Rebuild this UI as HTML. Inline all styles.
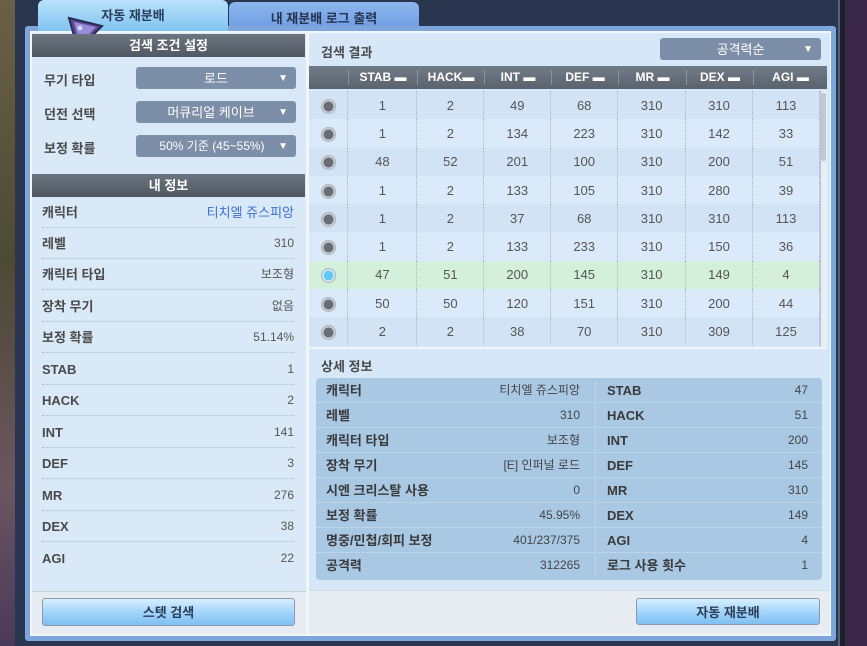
<!DOCTYPE html>
<html><head><meta charset="utf-8"><style>
*{margin:0;padding:0;box-sizing:border-box}
body{width:867px;height:646px;overflow:hidden;position:relative;background:#2a3550;font-family:"Liberation Sans","Noto Sans CJK KR","NanumGothic",sans-serif;font-size:13px;color:#444}
.a{position:absolute}
.bgl{left:0;top:0;width:15px;height:646px;background:linear-gradient(180deg,#6a6048,#4d4a34 40%,#6b5560 75%,#4a3a5a)}
.bgr{left:845px;top:0;width:22px;height:646px;background:#3b2848}
.frameR{left:838px;top:0;width:7px;height:646px;background:#1c2130;border-left:2px solid #59627a}
.tab1{left:38px;top:0;width:190px;height:32px;background:linear-gradient(#b9e3fb,#7fc3f0);border-radius:6px 6px 0 0;text-align:center;font-weight:bold;color:#2a3d5a;padding-top:5px;font-size:13px}
.tab2{left:229px;top:2px;width:190px;height:30px;background:linear-gradient(#8cb6ee,#6b9be2);border-radius:6px 6px 0 0;text-align:center;font-weight:bold;color:#26324e;padding-top:6px;font-size:13px}
.win{left:25px;top:26px;width:811px;height:615px;background:#7ea6dc;border-radius:3px}
.inner{left:30px;top:31px;width:801px;height:605px;background:#f2f6fa}
.lp{left:32px;top:33px;width:274px;height:601px;background:#dae9f8}
.rp{left:309px;top:33px;width:521px;height:601px;background:#d6e8f8}
.hd{background:linear-gradient(#6c7480,#505862);color:#fff;font-weight:bold;text-align:center;height:23px;line-height:23px;font-size:13px}
.lab{font-weight:bold;color:#4a4a4a;font-size:13px}
.dd{background:#7c8ea8;color:#fff;height:22px;line-height:23px;border-radius:3px;text-align:center;font-size:13px}
.dd:after{content:"▼";position:absolute;right:8px;top:0;font-size:10px}
.row{left:42px;width:252px;height:31px;border-bottom:1px dotted #aab8c8;line-height:31px}
.row b{float:left;color:#4a4a4a}
.row span{float:right;color:#555;font-size:12px}
.btn{background:linear-gradient(#d8efff,#9fd3fa 55%,#7fc0f2);border:1px solid #8a9aae;border-radius:3px;text-align:center;font-weight:bold;color:#2c3d58;line-height:27px}
table{border-collapse:collapse}
.tb td{height:28.3px;text-align:center;font-size:13px;color:#555;border-right:1px dotted #a8b8cc;vertical-align:middle}
.tb tr:nth-child(odd) td{background:#d2e3f6}
.tb tr:nth-child(even) td{background:#dbeafa}
.tb tr.sel td{background:#d4f0da}
.rd{display:inline-block;vertical-align:middle;margin-top:2px;width:15px;height:15px;border-radius:50%;background:radial-gradient(#6a6e74 45%,#d8dde4 50%,#8a9098 80%)}
.rd.on{background:radial-gradient(#5ec8f2 42%,#eaf4fa 50%,#7a8898 80%)}
.th{left:309px;top:66px;width:518px;height:23px;background:linear-gradient(#727b88,#5a626e);color:#fff;font-weight:bold;font-size:12px}
.th div{position:absolute;top:0;text-align:center;border-left:1px solid #8a929e;height:15px;margin-top:4px;line-height:15px}
.det{left:316px;top:378px;width:506px;height:202px;background:#a9c8e4;border-radius:4px}
.dr{position:absolute;height:25px;line-height:25px;border-bottom:1px dotted #d0e0ee;font-size:12px}
.dr b{position:absolute;left:10px;color:#3a3a3a;font-size:13px}
.dr span{position:absolute;right:14px;color:#444}
</style></head><body>
<div class="a bgl"></div><div class="a bgr"></div><div class="a frameR"></div>
<div class="a tab2">내 재분배 로그 출력</div>
<div class="a win"></div>
<div class="a tab1">자동 재분배</div>
<div class="a inner"></div>
<div class="a lp"></div>
<div class="a rp"></div>
<svg class="a" style="left:66px;top:16px" width="38" height="36"><polygon points="3,2 36,10 12,34" fill="#5b4a9a" stroke="#2a2a4a" stroke-width="2"/><polygon points="8,6 30,11 14,28" fill="#9a8ad8"/><circle cx="14" cy="12" r="2.5" fill="#cde"/></svg>
<div class="a hd" style="left:32px;top:34px;width:273px">검색 조건 설정</div>
<div class="a lab" style="left:44px;top:70px">무기 타입</div><div class="a dd" style="left:136px;top:67px;width:160px">로드</div>
<div class="a lab" style="left:44px;top:104px">던전 선택</div><div class="a dd" style="left:136px;top:101px;width:160px;padding-right:10px">머큐리얼 케이브</div>
<div class="a lab" style="left:44px;top:138px">보정 확률</div><div class="a dd" style="left:136px;top:135px;width:160px;font-size:12px;padding-right:8px">50% 기준 (45~55%)</div>
<div class="a hd" style="left:32px;top:174px;width:273px">내 정보</div>
<div class="a row" style="top:197px"><b>캐릭터</b><span style="color:#3a6fd0;font-size:13px">티치엘 쥬스피앙</span></div>
<div class="a row" style="top:228px"><b>레벨</b><span>310</span></div>
<div class="a row" style="top:259px"><b>캐릭터 타입</b><span>보조형</span></div>
<div class="a row" style="top:291px"><b>장착 무기</b><span>없음</span></div>
<div class="a row" style="top:322px"><b>보정 확률</b><span>51.14%</span></div>
<div class="a row" style="top:354px"><b>STAB</b><span>1</span></div>
<div class="a row" style="top:385px"><b>HACK</b><span>2</span></div>
<div class="a row" style="top:417px"><b>INT</b><span>141</span></div>
<div class="a row" style="top:448px"><b>DEF</b><span>3</span></div>
<div class="a row" style="top:480px"><b>MR</b><span>276</span></div>
<div class="a row" style="top:511px"><b>DEX</b><span>38</span></div>
<div class="a row" style="top:543px;border:none"><b>AGI</b><span>22</span></div>
<div class="a" style="left:32px;top:591px;width:274px;height:43px;background:#e6ecf2;border-top:1px solid #c8d4de"></div>
<div class="a btn" style="left:42px;top:598px;width:253px;height:28px">스텟 검색</div>

<div class="a lab" style="left:321px;top:42px">검색 결과</div>
<div class="a dd" style="left:660px;top:38px;width:161px">공격력순</div>
<div class="a th">
<div style="left:39px;width:69px">STAB ▬</div><div style="left:108px;width:67px">HACK▬</div><div style="left:175px;width:67px">INT ▬</div><div style="left:242px;width:67px">DEF ▬</div><div style="left:309px;width:68px">MR ▬</div><div style="left:377px;width:67px">DEX ▬</div><div style="left:444px;width:74px">AGI ▬</div>
</div>
<table class="a tb" style="left:309px;top:91px;width:511px">
<colgroup><col style="width:39px"><col style="width:69px"><col style="width:67px"><col style="width:67px"><col style="width:67px"><col style="width:68px"><col style="width:67px"><col style="width:67px"></colgroup>
<tr><td><span class="rd"></span></td><td>1</td><td>2</td><td>49</td><td>68</td><td>310</td><td>310</td><td>113</td></tr>
<tr><td><span class="rd"></span></td><td>1</td><td>2</td><td>134</td><td>223</td><td>310</td><td>142</td><td>33</td></tr>
<tr><td><span class="rd"></span></td><td>48</td><td>52</td><td>201</td><td>100</td><td>310</td><td>200</td><td>51</td></tr>
<tr><td><span class="rd"></span></td><td>1</td><td>2</td><td>133</td><td>105</td><td>310</td><td>280</td><td>39</td></tr>
<tr><td><span class="rd"></span></td><td>1</td><td>2</td><td>37</td><td>68</td><td>310</td><td>310</td><td>113</td></tr>
<tr><td><span class="rd"></span></td><td>1</td><td>2</td><td>133</td><td>233</td><td>310</td><td>150</td><td>36</td></tr>
<tr class="sel"><td><span class="rd on"></span></td><td>47</td><td>51</td><td>200</td><td>145</td><td>310</td><td>149</td><td>4</td></tr>
<tr><td><span class="rd"></span></td><td>50</td><td>50</td><td>120</td><td>151</td><td>310</td><td>200</td><td>44</td></tr>
<tr><td><span class="rd"></span></td><td>2</td><td>2</td><td>38</td><td>70</td><td>310</td><td>309</td><td>125</td></tr>
</table>
<div class="a" style="left:820px;top:91px;width:7px;height:256px;background:#e8eef4;border-left:1px solid #b8c4d0"></div>
<div class="a" style="left:821px;top:93px;width:5px;height:68px;background:#c0c8d0;border-radius:2px"></div>
<div class="a" style="left:309px;top:347px;width:518px;height:2px;background:#eef4fa"></div>
<div class="a lab" style="left:321px;top:356px">상세 정보</div>
<div class="a det">
<div class="dr" style="left:0;top:0;width:278px"><b>캐릭터</b><span>티치엘 쥬스피앙</span></div>
<div class="dr" style="left:0;top:25px;width:278px"><b>레벨</b><span>310</span></div>
<div class="dr" style="left:0;top:50px;width:278px"><b>캐릭터 타입</b><span>보조형</span></div>
<div class="dr" style="left:0;top:75px;width:278px"><b>장착 무기</b><span>[E] 인퍼널 로드</span></div>
<div class="dr" style="left:0;top:100px;width:278px"><b>시엔 크리스탈 사용</b><span>0</span></div>
<div class="dr" style="left:0;top:125px;width:278px"><b>보정 확률</b><span>45.95%</span></div>
<div class="dr" style="left:0;top:150px;width:278px"><b>명중/민첩/회피 보정</b><span>401/237/375</span></div>
<div class="dr" style="left:0;top:175px;width:278px;border:none"><b>공격력</b><span>312265</span></div>
<div class="a" style="left:279px;top:4px;width:1px;height:194px;border-left:1px dotted #d0e0ee"></div>
<div class="dr" style="left:281px;top:0;width:225px"><b>STAB</b><span>47</span></div>
<div class="dr" style="left:281px;top:25px;width:225px"><b>HACK</b><span>51</span></div>
<div class="dr" style="left:281px;top:50px;width:225px"><b>INT</b><span>200</span></div>
<div class="dr" style="left:281px;top:75px;width:225px"><b>DEF</b><span>145</span></div>
<div class="dr" style="left:281px;top:100px;width:225px"><b>MR</b><span>310</span></div>
<div class="dr" style="left:281px;top:125px;width:225px"><b>DEX</b><span>149</span></div>
<div class="dr" style="left:281px;top:150px;width:225px"><b>AGI</b><span>4</span></div>
<div class="dr" style="left:281px;top:175px;width:225px;border:none"><b>로그 사용 횟수</b><span>1</span></div>
</div>
<div class="a" style="left:309px;top:590px;width:521px;height:44px;background:#e6ecf2;border-top:1px solid #d0dce6"></div>
<div class="a btn" style="left:636px;top:598px;width:184px;height:27px">자동 재분배</div>
</body></html>
